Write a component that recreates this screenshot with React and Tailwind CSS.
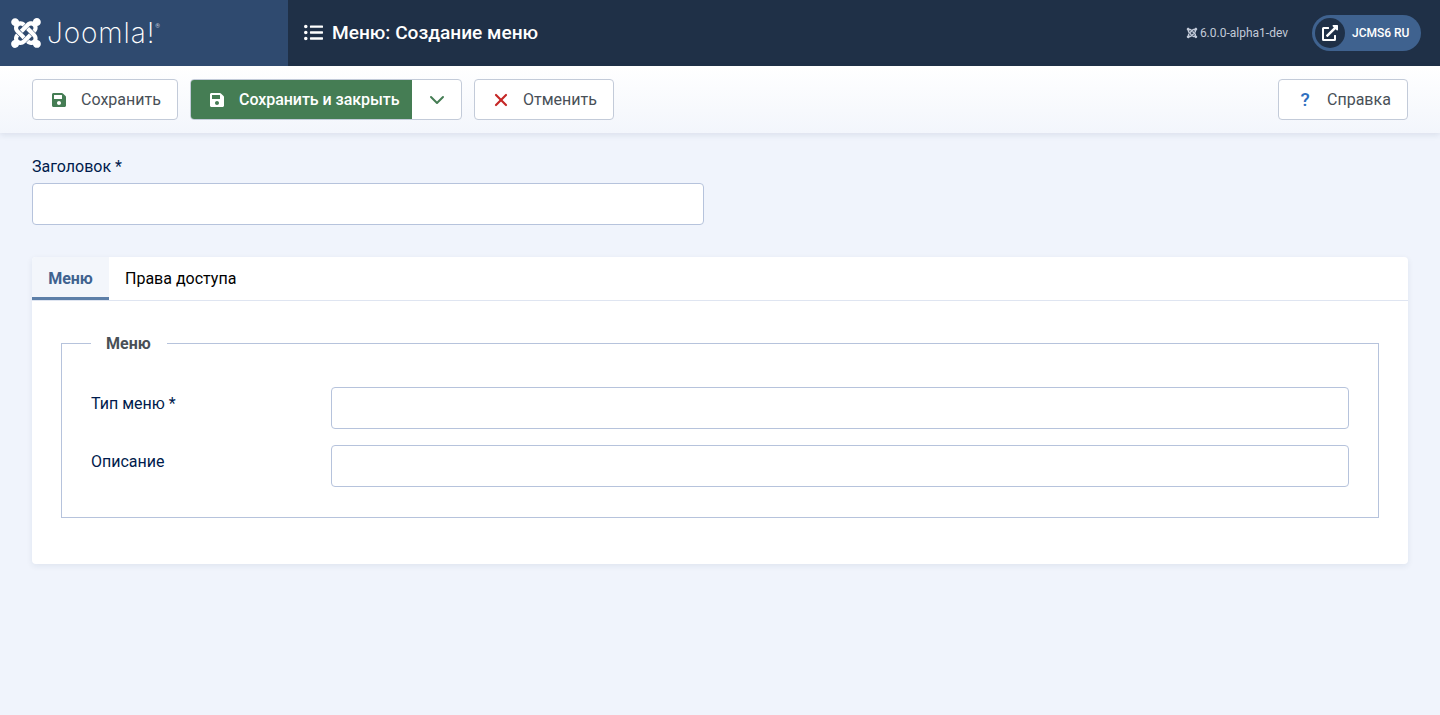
import { ChevronDown, X } from "lucide-react";
import { FaJoomla, FaListUl, FaExternalLinkAlt, FaSave } from "react-icons/fa";

export default function App() {
  const font = "font-['Roboto',sans-serif]";
  const btn = "h-[41px] bg-white border border-[#c3cbd9] rounded-[4px] flex items-center text-[16px] text-[#495057]";

  return (
    <div className={`min-h-[715px] bg-[#f0f4fc] ${font}`}>

      {/* Header */}
      <header className="h-[66px] bg-[#1f3047] flex items-center text-white">
        <div className="w-[288px] h-full bg-[#2f4a6f] flex items-center pl-[9px] gap-[4px]">
          <FaJoomla className="w-[34px] h-[34px] text-white" />
          <span className="font-['Inter',sans-serif] font-extralight text-[28px] leading-none tracking-[0.9px]">
            Joomla!
          </span>
          <span className="text-[6px] -ml-[4px] -mt-[16px] text-[#c3cbd9]">®</span>
        </div>
        <div className="flex items-center gap-[9px] pl-[16px] flex-1">
          <FaListUl className="w-[19px] h-[19px]" />
          <h1 className="text-[19.1px] font-medium mt-[1px]">Меню: Создание меню</h1>
        </div>
        <div className="flex items-center text-[12px] text-[#c3cbd9] mr-[24px] gap-[2px]">
          <FaJoomla className="w-[12px] h-[12px]" />
          <span>6.0.0-alpha1-dev</span>
        </div>
        <div className="h-[36px] w-[109px] mr-[19px] rounded-full bg-[#3f628f] flex items-center pl-[3px]">
          <span className="w-[30px] h-[30px] rounded-full bg-[#1f3047] flex items-center justify-center">
            <FaExternalLinkAlt className="w-[16px] h-[16px]" />
          </span>
          <span className="ml-[7px] text-[12px] font-medium">JCMS6 RU</span>
        </div>
      </header>

      {/* Toolbar */}
      <div className="h-[67px] bg-gradient-to-b from-white to-[#f3f6fc] shadow-[0_2px_6px_rgba(30,50,90,0.1)] px-[32px] flex items-center">
        <button className={`${btn} w-[146px] pl-[19px]`}>
          <FaSave className="w-[14px] h-[16px] text-[#457d54]" />
          <span className="ml-[15px]">Сохранить</span>
        </button>
        <div className={`${btn} ml-[12px] w-[272px] overflow-hidden`}>
          <button className="h-full w-[221px] bg-[#457d54] text-white font-medium flex items-center pl-[19px]">
            <FaSave className="w-[14px] h-[16px]" />
            <span className="ml-[15px] tracking-[-0.05px]">Сохранить и закрыть</span>
          </button>
          <span className="flex-1 flex justify-center text-[#457d54]">
            <ChevronDown className="w-[24px] h-[24px]" strokeWidth={2} />
          </span>
        </div>
        <button className={`${btn} ml-[12px] w-[140px] pl-[16px]`}>
          <X className="w-[20px] h-[20px] text-[#c52827]" strokeWidth={2.6} />
          <span className="ml-[12px]">Отменить</span>
        </button>
        <button className={`${btn} ml-auto w-[130px] pl-[20px]`}>
          <span className="w-[12px] text-[19px] leading-none font-medium text-[#2f6fc0]">?</span>
          <span className="ml-[16px]">Справка</span>
        </button>
      </div>

      <main className="px-[32px] pt-[25px]">
        {/* Title field */}
        <label className="block text-[16px] leading-[18px] text-[#001b4c]">Заголовок *</label>
        <input className="block mt-[7px] w-[672px] h-[42px] bg-white border border-[#b6c3dc] rounded-[4px]" />

        {/* Card */}
        <section className="mt-[32px] bg-white rounded-[4px] shadow-[0_2px_6px_rgba(30,50,90,0.08)] pb-[46px]">
          <div className="flex h-[44px] border-b border-[#dfe5f1]">
            <div className="w-[77px] h-[43px] pt-[3px] bg-[#f3f6fb] border-b-[3px] border-[#5d7fa8] rounded-tl-[4px] flex items-center justify-center text-[16px] font-bold text-[#3f628f]">
              Меню
            </div>
            <div className="px-[16px] h-[43px] flex items-center text-[16px] text-black">Права доступа</div>
          </div>

          <div className="px-[29px] pt-[42px]">
            <fieldset className="relative border border-[#b6c3dc] px-[29px] pt-[43px] pb-[30px]">
              <legend className="absolute -top-[10px] left-[29px] pl-[15px] pr-[16px] bg-white text-[16px] leading-[20px] font-bold text-[#495057]">
                Меню
              </legend>
              <div className="flex h-[42px]">
                <label className="w-[240px] text-[16px] pt-[5px] text-[#001b4c]">Тип меню *</label>
                <input className="flex-1 bg-white border border-[#b6c3dc] rounded-[4px]" />
              </div>
              <div className="flex h-[42px] mt-[16px]">
                <label className="w-[240px] text-[16px] pt-[5px] text-[#001b4c]">Описание</label>
                <input className="flex-1 bg-white border border-[#b6c3dc] rounded-[4px]" />
              </div>
            </fieldset>
          </div>
        </section>
      </main>
    </div>
  );
}
